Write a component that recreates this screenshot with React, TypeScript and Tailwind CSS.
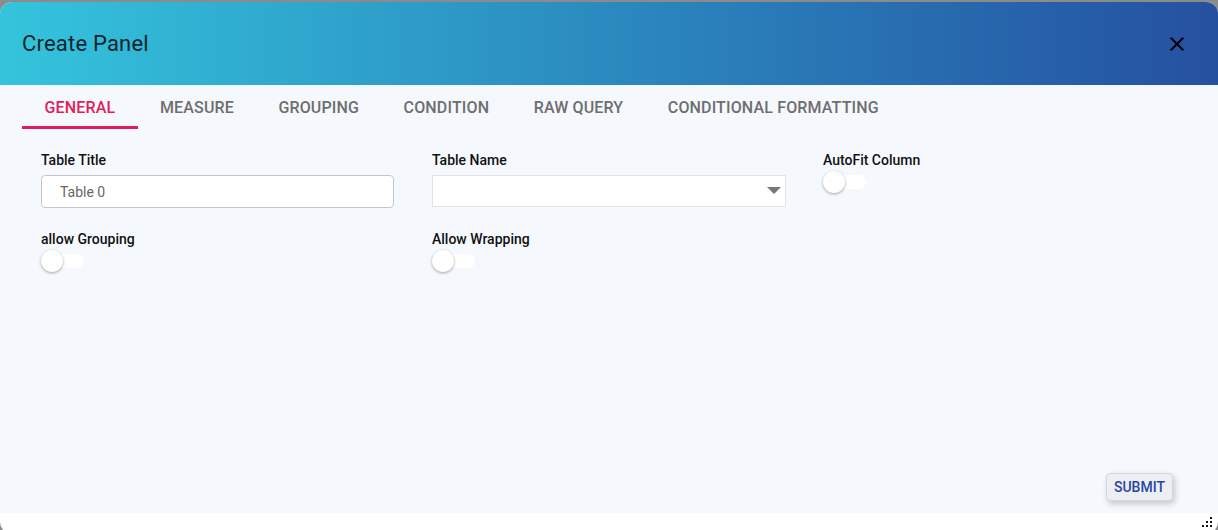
import { useState } from 'react'

const tabs = ['GENERAL', 'MEASURE', 'GROUPING', 'CONDITION', 'RAW QUERY', 'CONDITIONAL FORMATTING']

const Toggle = () => (
  <div className="relative h-[22px] w-[44px]">
    <div className="absolute left-[11px] top-[4px] h-[14px] w-[32px] rounded-full bg-white" />
    <div className="absolute left-0 top-0 h-[22px] w-[22px] rounded-full bg-white shadow-[0_1px_3px_rgba(0,0,0,0.35)]" />
  </div>
)

const Label = ({ children }: { children: string }) => (
  <div className="text-[14px] font-medium leading-[16px] text-[#111]">{children}</div>
)

export default function App() {
  const [active, setActive] = useState(0)

  return (
    <div className="h-[530px] w-[1218px] overflow-hidden bg-[#8b8b8b] pt-[2px]" style={{ fontFamily: 'Roboto, "Liberation Sans", sans-serif' }}>
      <div className="relative flex h-[532px] flex-col overflow-hidden rounded-[12px] bg-white">
        {/* Header */}
        <div className="flex h-[83px] shrink-0 items-center justify-between bg-gradient-to-r from-[#34c4dc] to-[#2550a0] pl-[22px] pr-[29px]">
          <h2 className="text-[22px] font-normal leading-none tracking-[0.2px] text-[#13252d]">Create Panel</h2>
          <svg width="24" height="24" viewBox="0 0 24 24" className="text-black">
            <path fill="currentColor" d="M19 6.41L17.59 5 12 10.59 6.41 5 5 6.41 10.59 12 5 17.59 6.41 19 12 13.41 17.59 19 19 17.59 13.41 12z" />
          </svg>
        </div>

        {/* Body */}
        <div className="flex h-[428px] shrink-0 flex-col bg-[#f5f9fd]">
          <div className="flex h-[45px] px-[22px]">
            {tabs.map((t, i) => (
              <button
                key={t}
                onClick={() => setActive(i)}
                className={
                  i === active
                    ? 'relative h-full px-[22.5px] pt-[1px] text-[16px] font-medium tracking-[0.15px] text-[#e11d5c]'
                    : 'relative h-full px-[22.25px] pt-[1px] text-[16px] font-medium tracking-[0.15px] text-[#6e6e6e]'
                }
              >
                {t}
                {i === active && <span className="absolute bottom-[1px] left-0 right-0 h-[3px] bg-[#e11d5c]" />}
              </button>
            ))}
          </div>

          <div className="grid grid-cols-[353px_353px_1fr] gap-x-[38px] gap-y-[23px] px-[41px] pt-[22px]">
            <div className="flex flex-col gap-[7px]">
              <Label>Table Title</Label>
              <input
                defaultValue="Table 0"
                className="h-[33px] w-full rounded-[4px] border border-[#c6c6c6] bg-white px-[18px] text-[14px] text-[#666] outline-none"
              />
            </div>
            <div className="flex flex-col gap-[7px]">
              <Label>Table Name</Label>
              <div className="flex h-[32px] w-[354px] items-center justify-end border border-[#e3e3e3] bg-white pr-[4px]">
                <svg width="14" height="8" viewBox="0 0 14 8">
                  <path d="M0 0h14L7 7z" fill="#777" />
                </svg>
              </div>
            </div>
            <div className="flex flex-col gap-[3px]">
              <Label>AutoFit Column</Label>
              <Toggle />
            </div>
            <div className="flex flex-col gap-[3px]">
              <Label>allow Grouping</Label>
              <Toggle />
            </div>
            <div className="flex flex-col gap-[3px]">
              <Label>Allow Wrapping</Label>
              <Toggle />
            </div>
          </div>

          <div className="mt-auto flex justify-end pb-[12px] pr-[45px]">
            <button className="h-[28px] w-[67px] rounded-[4px] border border-[#d2d6de] bg-[#eceef4] text-[14px] font-medium text-[#2a45a0] shadow-[2px_3px_6px_rgba(0,0,0,0.2)]">
              SUBMIT
            </button>
          </div>
        </div>

        {/* Resize grip */}
        <svg className="absolute left-[1200px] top-[514px]" width="14" height="14" viewBox="0 0 14 14">
          <rect x="10" y="1" width="2" height="2" fill="#111" />
          <rect x="6" y="5" width="2" height="2" fill="#111" />
          <rect x="10" y="5" width="2" height="2" fill="#111" />
          <rect x="2" y="9" width="2" height="2" fill="#111" />
          <rect x="6" y="9" width="2" height="2" fill="#111" />
          <rect x="10" y="9" width="2" height="2" fill="#111" />
        </svg>
      </div>
    </div>
  )
}
